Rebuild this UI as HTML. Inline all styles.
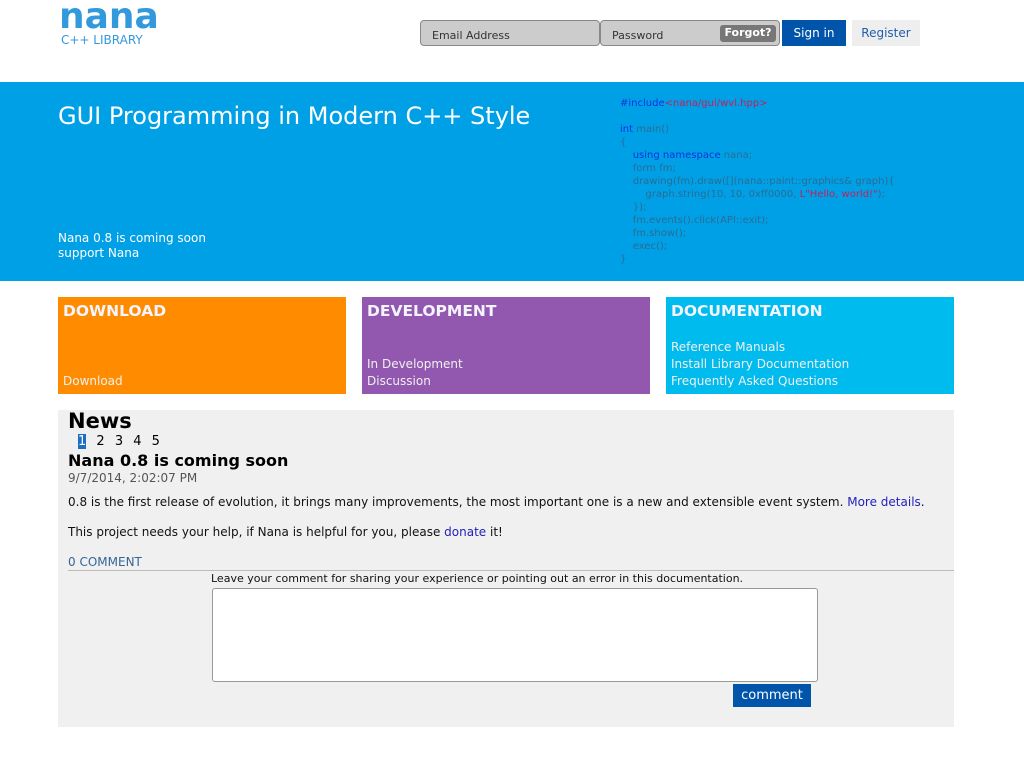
<!DOCTYPE html>
<html><head><meta charset="utf-8"><style>
*{margin:0;padding:0;box-sizing:border-box}
body{width:1024px;height:768px;background:#fff;font-family:"DejaVu Sans","Liberation Sans",sans-serif;position:relative;overflow:hidden;font-size:13px}
.a{position:absolute;white-space:nowrap}
.logo{left:59px;top:-4px;font-size:36px;font-weight:bold;color:#3399dd}
.sub{left:61px;top:33px;font-size:12px;color:#3399dd}
.inp{top:20px;height:26px;background:#ccc;border:1px solid #888;border-radius:4px;font-size:11px;color:#333;padding:8px 0 0 11px}
.btn{top:20px;height:26px;font-size:12px;padding-top:6px;text-align:center}
#ban{left:0;top:82px;width:1024px;height:199px;background:#00a0e6}
.code{font-size:10px;line-height:13px;color:#2a6c94;white-space:pre;left:620px;top:97px}
.kw{color:#1133dd}.st{color:#c0205a}
.tile{top:297px;height:97px;color:#fff;padding:5px 5px}
.tile h3{font-size:15.5px;font-weight:bold;color:#f4f4ff}
.tile .l{position:absolute;left:5px;bottom:4px;font-size:12px;line-height:17px;color:#f0f0f0}
#news{left:58px;top:410px;width:896px;height:317px;background:#f0f0f0}
</style></head><body>
<div class="a logo">nana</div>
<div class="a sub">C++ LIBRARY</div>
<div class="a inp" style="left:420px;width:180px">Email Address</div>
<div class="a inp" style="left:600px;width:180px">Password</div>
<div class="a" style="left:720px;top:25px;width:56px;height:17px;background:#777;border-radius:3px;color:#fff;font-size:11px;font-weight:bold;text-align:center;padding-top:1px">Forgot?</div>
<div class="a btn" style="left:782px;width:64px;background:#0055aa;color:#fff">Sign in</div>
<div class="a btn" style="left:852px;width:68px;background:#eee;color:#1f5faa">Register</div>
<div class="a" id="ban"></div>
<div class="a" style="left:58px;top:102px;font-size:24px;color:#fff">GUI Programming in Modern C++ Style</div>
<div class="a" style="left:58px;top:231px;font-size:12px;line-height:15px;color:#fff">Nana 0.8 is coming soon<br>support Nana</div>
<div class="a code"><span class="kw">#include</span><span class="st">&lt;nana/gui/wvl.hpp&gt;</span>

<span class="kw">int</span> main()
{
    <span class="kw">using namespace</span> nana;
    form fm;
    drawing(fm).draw([](nana::paint::graphics&amp; graph){
        graph.string(10, 10, 0xff0000, <span class="st">L"Hello, world!"</span>);
    });
    fm.events().click(API::exit);
    fm.show();
    exec();
}</div>
<div class="a tile" style="left:58px;width:288px;background:#ff8c00"><h3>DOWNLOAD</h3><div class="l">Download</div></div>
<div class="a tile" style="left:362px;width:288px;background:#9258b0"><h3>DEVELOPMENT</h3><div class="l">In Development<br>Discussion</div></div>
<div class="a tile" style="left:666px;width:288px;background:#00bbee"><h3>DOCUMENTATION</h3><div class="l">Reference Manuals<br>Install Library Documentation<br>Frequently Asked Questions</div></div>
<div class="a" id="news"></div>
<div class="a" style="left:68px;top:409px;font-size:21px;font-weight:bold;color:#000">News</div>
<div class="a" style="left:78px;top:434px;font-size:13px;color:#000;word-spacing:6px"><span style="background:#1a6fc0;color:#fff">1</span> 2 3 4 5</div>
<div class="a" style="left:68px;top:451px;font-size:16px;font-weight:bold;color:#000">Nana 0.8 is coming soon</div>
<div class="a" style="left:68px;top:471px;font-size:12px;color:#555">9/7/2014, 2:02:07 PM</div>
<div class="a" style="left:68px;top:495px;font-size:12px;color:#111">0.8 is the first release of evolution, it brings many improvements, the most important one is a new and extensible event system. <span style="color:#2222bb">More details</span>.</div>
<div class="a" style="left:68px;top:525px;font-size:12px;color:#111">This project needs your help, if Nana is helpful for you, please <span style="color:#2222bb">donate</span> it!</div>
<div class="a" style="left:68px;top:555px;font-size:12px;color:#336699">0 COMMENT</div>
<div class="a" style="left:68px;top:570px;width:886px;height:1px;background:#bbb"></div>
<div class="a" style="left:211px;top:572px;font-size:11px;color:#111">Leave your comment for sharing your experience or pointing out an error in this documentation.</div>
<div class="a" style="left:212px;top:588px;width:606px;height:94px;background:#fff;border:1px solid #999;border-radius:3px"></div>
<div class="a" style="left:733px;top:684px;width:78px;height:23px;background:#0055aa;color:#fff;font-size:13px;text-align:center;padding-top:4px">comment</div>
</body></html>
